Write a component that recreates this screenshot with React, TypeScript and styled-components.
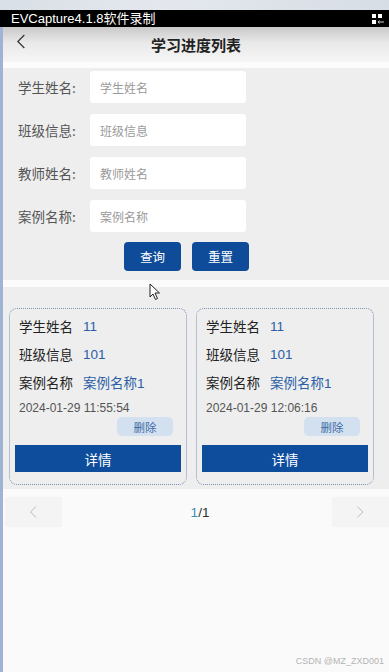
import React from 'react'
import styled, { createGlobalStyle } from 'styled-components'

const GlobalStyle = createGlobalStyle`
    html, body {
        margin: 0;
        padding: 0;
        background: #fafafa;
        font-family: "Noto Sans CJK SC", "Noto Sans", sans-serif;
    }
`;

const Page = styled.div`
    position: relative;
    width: 389px;
    height: 672px;
    overflow: hidden;
    background: #fafafa;
    display: flex;
    flex-direction: column;
`;

const TopStrip = styled.div`
    height: 10px;
    background: linear-gradient(90deg, #d9dfe6, #e4e8ee 40%, #d7dde5);
`;

const RecorderBar = styled.div`
    height: 17px;
    background: #000;
    color: #fff;
    font-size: 13px;
    line-height: 17px;
    padding-left: 11px;
    padding-right: 4px;
    display: flex;
    align-items: center;
    justify-content: space-between;
    font-family: "Liberation Sans", "Noto Sans CJK SC", sans-serif;
`;

const Body = styled.div`
    flex: 1;
    display: flex;
    flex-direction: column;
    border-left: 3px solid #9fb4d2;
`;

const Header = styled.div`
    height: 35px;
    background: linear-gradient(180deg, #c9c9c9 0%, #e9e9e9 45%, #f6f6f6 100%);
    display: flex;
    align-items: center;
    position: relative;
`;

const Back = styled.div`
    width: 40px;
    padding-left: 13px;
    display: flex;
    align-items: center;
    margin-top: -6px;
`;

const Title = styled.div`
    position: absolute;
    left: 0;
    right: 0;
    text-align: center;
    font-size: 15px;
    font-weight: bold;
    color: #222;
    pointer-events: none;
`;

const Divider = styled.div`
    height: 6px;
    background: #fcfcfc;
`;

const Form = styled.div`
    background: #eeeeee;
    padding: 3px 0 9px 15px;
    display: flex;
    flex-direction: column;
    gap: 11px;
`;

const Row = styled.div`
    display: flex;
    align-items: center;
`;

const Label = styled.div`
    width: 72px;
    font-size: 13.5px;
    color: #555;
`;

const Input = styled.input`
    width: 156px;
    height: 32px;
    box-sizing: border-box;
    border: none;
    border-radius: 3px;
    background: #fff;
    padding: 0 10px;
    font-family: inherit;
    font-size: 12px;
    outline: none;
    &::placeholder {
        color: #9a9a9a;
    }
`;

const Buttons = styled.div`
    display: flex;
    gap: 11px;
    padding-left: 106px;
    margin-top: -1px;
`;

const BlueButton = styled.button`
    width: 57px;
    height: 29px;
    border: none;
    border-radius: 4px;
    background: #0e4c99;
    color: #fff;
    font-family: inherit;
    font-size: 12.5px;
    padding: 0;
`;

const Gap = styled.div`
    height: 7px;
    background: #fbfbfb;
`;

const CardArea = styled.div`
    background: #eeeeee;
    padding: 21px 15px 4px 6px;
    display: flex;
    gap: 9px;
`;

const Card = styled.div`
    width: 178px;
    box-sizing: border-box;
    border: 1.5px dotted #7d8fb5;
    border-radius: 8px;
    padding: 3px 5px 12px 5px;
    display: flex;
    flex-direction: column;
`;

const Line = styled.div`
    display: flex;
    align-items: center;
    height: 28px;
    padding-left: 4px;
    font-size: 13.5px;
`;

const Key = styled.span`
    color: #222;
    margin-right: 10px;
`;

const Value = styled.span`
    color: #2b5ea6;
    font-family: "Liberation Sans", "Noto Sans CJK SC", sans-serif;
`;

const Date = styled.div`
    padding-left: 4px;
    margin-top: 5px;
    font-size: 12px;
    color: #555;
    font-family: "Liberation Sans", sans-serif;
`;

const DeleteRow = styled.div`
    display: flex;
    justify-content: flex-end;
    padding-right: 8px;
    margin-top: 2px;
`;

const DeleteButton = styled.button`
    width: 56px;
    height: 19px;
    border: none;
    border-radius: 5px;
    background: #d3e0ef;
    color: #3c6aa6;
    font-family: inherit;
    font-size: 11.5px;
    padding: 0;
`;

const DetailButton = styled.button`
    height: 27px;
    margin-top: 9px;
    border: none;
    background: #0e4c9c;
    color: #fff;
    font-family: inherit;
    font-size: 13.5px;
    padding: 0;
`;

const Pager = styled.div`
    margin-top: 8px;
    display: flex;
    align-items: center;
    justify-content: space-between;
    height: 30px;
    padding-left: 2px;
`;

const PageButton = styled.div`
    width: 57px;
    height: 30px;
    background: #f4f4f4;
    display: flex;
    align-items: center;
    justify-content: center;
`;

const PageText = styled.div`
    font-size: 13.5px;
    color: #333;
    font-family: "Liberation Sans", sans-serif;
    margin-left: 6px;
`;

const Current = styled.span`
    color: #3a8fb7;
`;

const Watermark = styled.div`
    position: absolute;
    right: 5px;
    bottom: 6px;
    font-size: 9px;
    color: #b4b4b4;
    font-family: "Liberation Sans", sans-serif;
`;

const Cursor = styled.svg`
    position: absolute;
    left: 149px;
    top: 283px;
`;

const fields = [
    { label: '学生姓名:', placeholder: '学生姓名' },
    { label: '班级信息:', placeholder: '班级信息' },
    { label: '教师姓名:', placeholder: '教师姓名' },
    { label: '案例名称:', placeholder: '案例名称' },
]

const records = [
    { name: '11', clazz: '101', caseName: '案例名称1', time: '2024-01-29 11:55:54' },
    { name: '11', clazz: '101', caseName: '案例名称1', time: '2024-01-29 12:06:16' },
]

function Chevron({ dir, color, size }: { dir: 'left' | 'right', color: string, size: number }) {
    const d = dir === 'left' ? 'M9 1 L2 8 L9 15' : 'M2 1 L9 8 L2 15'
    return (
        <svg width={size * 0.6} height={size} viewBox="0 0 11 16">
            <path d={d} fill="none" stroke={color} strokeWidth="1.3" />
        </svg>
    )
}

export default function App() {
    return (
        <Page>
            <GlobalStyle />
            <TopStrip />
            <RecorderBar>
                <span>EVCapture4.1.8软件录制</span>
                <svg width="14" height="12" viewBox="0 0 14 12">
                    <rect x="1" y="1" width="4" height="4" fill="#fff" />
                    <rect x="7" y="1" width="4" height="4" fill="#fff" />
                    <rect x="1" y="7" width="4" height="4" fill="#fff" />
                    <path d="M7 9 H13 M8.5 7.5 L7 9 L8.5 10.5" stroke="#ccc" strokeWidth="1" fill="none" />
                </svg>
            </RecorderBar>
            <Body>
                <Header>
                    <Back>
                        <Chevron dir="left" color="#333" size={17} />
                    </Back>
                    <Title>学习进度列表</Title>
                </Header>
                <Divider />
                <Form>
                    {fields.map(f => (
                        <Row key={f.label}>
                            <Label>{f.label}</Label>
                            <Input placeholder={f.placeholder} />
                        </Row>
                    ))}
                    <Buttons>
                        <BlueButton>查询</BlueButton>
                        <BlueButton>重置</BlueButton>
                    </Buttons>
                </Form>
                <Gap />
                <CardArea>
                    {records.map(r => (
                        <Card key={r.time}>
                            <Line><Key>学生姓名</Key><Value>{r.name}</Value></Line>
                            <Line><Key>班级信息</Key><Value>{r.clazz}</Value></Line>
                            <Line><Key>案例名称</Key><Value>{r.caseName}</Value></Line>
                            <Date>{r.time}</Date>
                            <DeleteRow>
                                <DeleteButton>删除</DeleteButton>
                            </DeleteRow>
                            <DetailButton>详情</DetailButton>
                        </Card>
                    ))}
                </CardArea>
                <Pager>
                    <PageButton>
                        <Chevron dir="left" color="#b8b8b8" size={14} />
                    </PageButton>
                    <PageText><Current>1</Current>/1</PageText>
                    <PageButton>
                        <Chevron dir="right" color="#b8b8b8" size={14} />
                    </PageButton>
                </Pager>
            </Body>
            <Cursor width="12" height="18" viewBox="0 0 12 18">
                <path d="M1 1 L1 14 L4 11 L6.5 16.5 L8.5 15.5 L6 10 L10.5 10 Z" fill="#fff" stroke="#222" strokeWidth="1" />
            </Cursor>
            <Watermark>CSDN @MZ_ZXD001</Watermark>
        </Page>
    )
}
